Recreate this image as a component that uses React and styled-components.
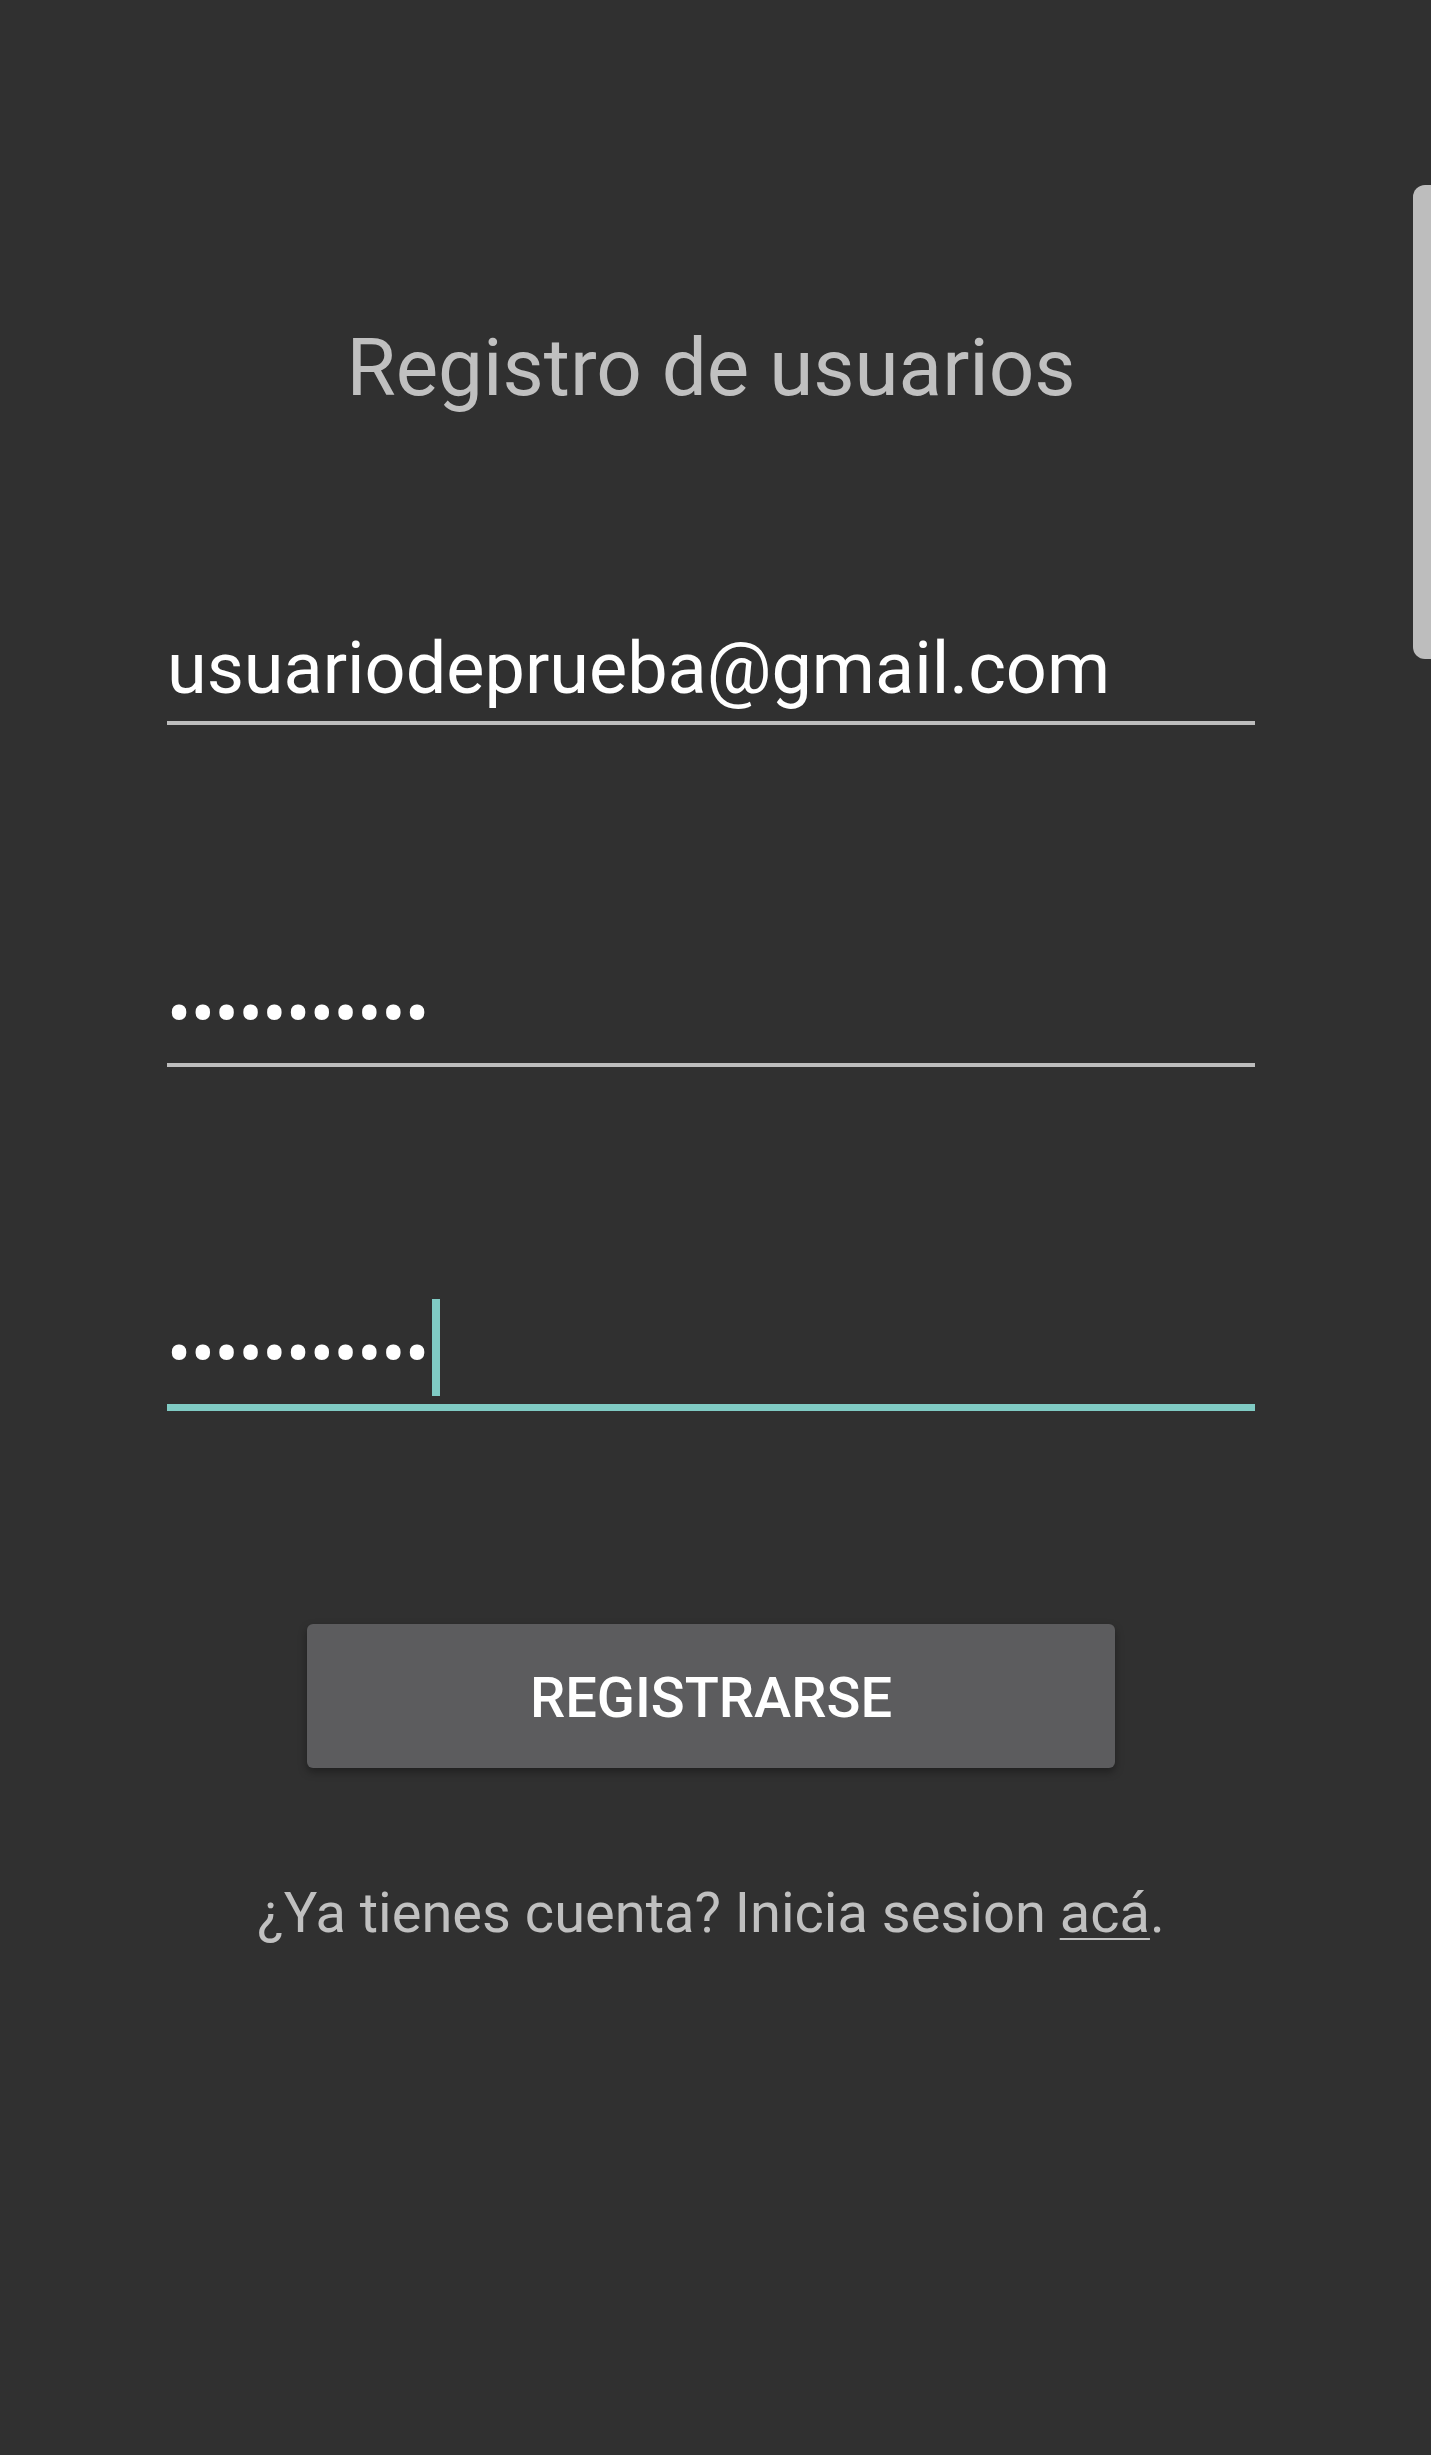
import React from "react";
import styled, { createGlobalStyle } from "styled-components";

const Color = {
  bg: "#303030",
  text: "#ffffff",
  muted: "#c0c0c0",
  line: "#bdbdbd",
  accent: "#80cbc4",
  button: "#5c5c5e",
};

const GlobalStyle = createGlobalStyle`
  html, body {
    margin: 0;
    padding: 0;
    background: ${Color.bg};
  }
  body {
    font-family: Roboto, "Noto Sans", Arial, sans-serif;
  }
`;

const Screen = styled.main`
  box-sizing: border-box;
  min-height: 2455px;
  padding: 321px 176px 0 167px;
  background: ${Color.bg};
  display: flex;
  flex-direction: column;
  align-items: center;
`;

const Title = styled.h1`
  margin: 0;
  font-size: 80px;
  line-height: 94px;
  font-weight: 400;
  color: ${Color.muted};
`;

const Form = styled.form`
  width: 100%;
  display: flex;
  flex-direction: column;
  align-items: center;
`;

const Field = styled.label`
  align-self: stretch;
  display: flex;
  align-items: center;
  height: 84px;
  margin-top: ${(p) => p.$gap}px;
  padding-bottom: ${(p) => p.$pad}px;
  border-bottom: ${(p) => (p.$focused ? 7 : 4)}px solid
    ${(p) => (p.$focused ? Color.accent : Color.line)};
`;

const Value = styled.span`
  font-size: 72px;
  line-height: 84px;
  letter-spacing: ${(p) => (p.$secret ? "-0.5px" : "normal")};
  color: ${Color.text};
  white-space: nowrap;
`;

const Cursor = styled.span`
  flex: none;
  width: 8px;
  height: 97px;
  margin: 0 0 15px 3px;
  background: ${Color.accent};
`;

const Button = styled.button`
  width: 808px;
  height: 144px;
  margin-top: 213px;
  border: none;
  border-radius: 6px;
  background: ${Color.button};
  box-shadow: 0 4px 8px rgba(0, 0, 0, 0.35);
  color: ${Color.text};
  font-family: Roboto, "Noto Sans", Arial, sans-serif;
  font-size: 56px;
  font-weight: 500;
  text-transform: uppercase;
  padding-top: 4px;
`;

const Footer = styled.p`
  margin: 112px 0 0;
  font-size: 56px;
  line-height: 66px;
  color: ${Color.muted};
`;

const Link = styled.a`
  color: inherit;
  text-decoration: underline;
  text-decoration-thickness: 2px;
  text-underline-offset: 6px;
`;

const ScrollThumb = styled.div`
  position: fixed;
  top: 185px;
  right: 0;
  width: 18px;
  height: 474px;
  border-radius: 12px 0 0 12px;
  background: ${Color.line};
`;

const DOTS = "•".repeat(11);

export default function App() {
  return (
    <>
      <GlobalStyle />
      <Screen>
        <Title>Registro de usuarios</Title>
        <Form onSubmit={(e) => e.preventDefault()}>
          <Field $gap={212} $pad={10}>
            <Value>usuariodeprueba@gmail.com</Value>
          </Field>
          <Field $gap={248} $pad={6}>
            <Value $secret>{DOTS}</Value>
          </Field>
          <Field $gap={246} $pad={7} $focused>
            <Value $secret>{DOTS}</Value>
            <Cursor />
          </Field>
          <Button type="submit">Registrarse</Button>
        </Form>
        <Footer>
          ¿Ya tienes cuenta? Inicia sesion <Link href="#">acá</Link>.
        </Footer>
      </Screen>
      <ScrollThumb />
    </>
  );
}
